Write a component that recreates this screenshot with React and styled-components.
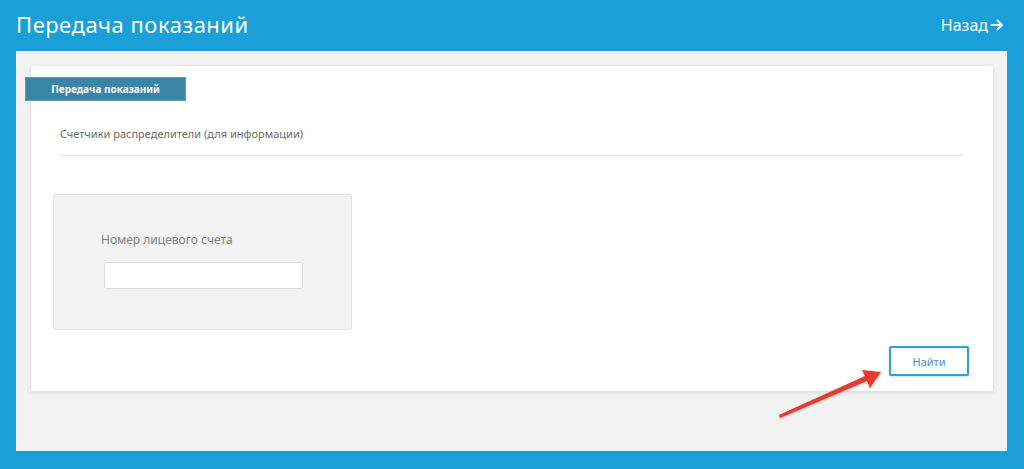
import React from 'react';
import styled, { createGlobalStyle } from 'styled-components';

const GlobalStyle = createGlobalStyle`
  html, body {
    margin: 0;
    padding: 0;
    background: #1a9fd8;
    font-family: 'Noto Sans', 'Open Sans', sans-serif;
  }
`;

const Page = styled.div`
  width: 1024px;
  height: 469px;
  background: #1a9fd8;
  display: flex;
  flex-direction: column;
  position: relative;
  overflow: hidden;
`;

const Header = styled.div`
  height: 51px;
  display: flex;
  align-items: center;
  justify-content: space-between;
  padding: 0 20px 4px 16px;
  box-sizing: border-box;
`;

const Title = styled.h1`
  margin: 0;
  color: #ffffff;
  font-size: 22px;
  font-weight: 400;
  letter-spacing: 0.5px;
`;

const BackLink = styled.a`
  display: flex;
  align-items: center;
  gap: 2px;
  color: #ffffff;
  font-size: 16px;
  text-decoration: none;
  margin-top: 2px;
`;

const Panel = styled.div`
  margin: 0 17px 0 16px;
  height: 400px;
  background: #f2f2f2;
  padding: 15px 14px 0 15px;
  box-sizing: border-box;
`;

const Card = styled.div`
  background: #ffffff;
  height: 325px;
  box-shadow: 0 1px 4px rgba(0, 0, 0, 0.12);
  padding: 11px 24px 15px 0;
  box-sizing: border-box;
  display: flex;
  flex-direction: column;
`;

const Tab = styled.div`
  margin-left: -6px;
  width: 161px;
  height: 24px;
  background: #3a85a6;
  color: #ffffff;
  font-size: 10px;
  font-weight: 700;
  display: flex;
  align-items: center;
  justify-content: center;
  box-sizing: border-box;
  border: 1px solid #5a9cbb;
`;

const Section = styled.div`
  margin: 25px 6px 0 29px;
  padding-bottom: 14px;
  border-bottom: 1px solid #e6e6e6;
  color: #6b6b6b;
  font-size: 11px;
`;

const SearchBox = styled.div`
  margin: 38px 0 0 22px;
  width: 299px;
  height: 136px;
  background: #f2f2f2;
  border: 1px solid #e4e4e4;
  border-radius: 2px;
  box-sizing: border-box;
  padding: 36px 0 0 47px;
`;

const Label = styled.div`
  color: #808080;
  font-size: 12px;
`;

const Input = styled.input`
  display: block;
  margin: 14px 0 0 3px;
  width: 199px;
  height: 27px;
  box-sizing: border-box;
  border: 1px solid #dcdcdc;
  border-radius: 2px;
  background: #ffffff;
  outline: none;
`;

const Actions = styled.div`
  margin-top: auto;
  display: flex;
  justify-content: flex-end;
`;

const FindButton = styled.button`
  width: 80px;
  height: 30px;
  background: #ffffff;
  border: 2px solid #2aa2dc;
  border-radius: 2px;
  color: #4d8fc4;
  font-family: 'Noto Sans', 'Open Sans', sans-serif;
  font-size: 11px;
  box-shadow: 0 1px 3px rgba(0, 0, 0, 0.15);
`;

const Annotation = styled.svg`
  position: absolute;
  left: 0;
  top: 0;
  pointer-events: none;
`;

export default function App() {
  return (
    <>
      <GlobalStyle />
      <Page>
        <Header>
          <Title>Передача показаний</Title>
          <BackLink href="#">
            Назад
            <svg width="14" height="14" viewBox="0 0 14 14" fill="none" stroke="#fff" strokeWidth="1.8" strokeLinecap="round" strokeLinejoin="round">
              <path d="M1.5 7h10.5M7.5 2.5L12 7l-4.5 4.5" />
            </svg>
          </BackLink>
        </Header>
        <Panel>
          <Card>
            <Tab>Передача показаний</Tab>
            <Section>Счетчики распределители (для информации)</Section>
            <SearchBox>
              <Label>Номер лицевого счета</Label>
              <Input type="text" />
            </SearchBox>
            <Actions>
              <FindButton>Найти</FindButton>
            </Actions>
          </Card>
        </Panel>
        <Annotation width="1024" height="469">
          <defs>
            <filter id="sh" x="-20%" y="-20%" width="140%" height="140%">
              <feDropShadow dx="0" dy="1" stdDeviation="1" floodColor="#000" floodOpacity="0.25" />
            </filter>
          </defs>
          <g filter="url(#sh)" fill="#e63b2e">
            <path d="M780 418 L779 415 L865 376 L862 370 L881 372 L870 388 L867 381 Z" />
          </g>
        </Annotation>
      </Page>
    </>
  );
}
